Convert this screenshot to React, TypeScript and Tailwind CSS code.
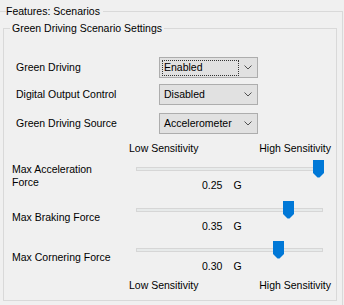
import React from "react";

const Chevron = () => (
  <svg width="8" height="5" viewBox="0 0 8 5" className="block">
    <polyline points="0.5,0.5 4,4 7.5,0.5" fill="none" stroke="#505050" strokeWidth="1" />
  </svg>
);

const Dropdown = ({ value, focused }: { value: string; focused?: boolean }) => (
  <div className="flex h-[21px] w-[99px] items-center border border-[#adadad] bg-[#e1e1e1]">
    <span
      className={
        "ml-[2px] flex h-[16px] w-[77px] items-center pl-[1px] leading-[13px] border border-dotted " +
        (focused ? "border-[#333333]" : "border-transparent")
      }
    >
      {value}
    </span>
    <div className="flex flex-1 justify-center">
      <Chevron />
    </div>
  </div>
);

const Thumb = ({ left }: { left: number }) => (
  <svg
    width="11"
    height="18"
    viewBox="0 0 11 18"
    className="absolute top-0 block"
    style={{ left }}
  >
    <path d="M0 0 H11 V13 L6.5 17.5 H4.5 L0 13 Z" fill="#0078d7" />
  </svg>
);

const SliderBlock = ({
  label,
  value,
  thumb,
}: {
  label: React.ReactNode;
  value: string;
  thumb: number;
}) => (
  <div className="flex">
    <div className="flex w-[117px] items-center leading-[13px]">{label}</div>
    <div className="w-[202px]">
      <div className="relative flex h-[18px] items-center">
        <div className="ml-[7px] mr-[8px] h-[4px] flex-1 border border-[#d6d6d6] bg-[#e7eaea]" />
        <Thumb left={thumb} />
      </div>
      <div className="flex h-[14px] items-center pl-[73px] leading-[13px]">
        <span>{value}</span>
        <span className="ml-[11px]">G</span>
      </div>
    </div>
  </div>
);

const SensRow = () => (
  <div className="flex h-[14px] items-center leading-[13px]">
    <div className="w-[117px]" />
    <div className="flex w-[202px] justify-between">
      <span>Low Sensitivity</span>
      <span>High Sensitivity</span>
    </div>
  </div>
);

export default function App() {
  return (
    <div
      className="h-[305px] w-[344px] overflow-hidden bg-[#f0f0f0] text-[10.5px] text-black"
      style={{ fontFamily: '"Liberation Sans", Arial, sans-serif' }}
    >
      <fieldset className="mt-[4px] h-[320px] w-[343px] border-t border-r border-[#d9d9d9]">
        <legend className="ml-[6px] pr-[3px] leading-[14px]">Features: Scenarios</legend>
        <fieldset className="ml-[3px] mt-[3px] h-[280px] w-[334px] border border-[#d9d9d9]">
          <legend className="ml-[6px] px-[2px] leading-[14px]">Green Driving Scenario Settings</legend>
          <div className="pl-[8px] pt-[22px]">
            <div className="flex h-[21px] items-center">
              <div className="w-[147px] pl-[4px]">Green Driving</div>
              <Dropdown value="Enabled" focused />
            </div>
            <div className="mt-[6px] flex h-[21px] items-center">
              <div className="w-[147px] pl-[4px]">Digital Output Control</div>
              <Dropdown value="Disabled" />
            </div>
            <div className="mt-[8px] flex h-[21px] items-center">
              <div className="w-[147px] pl-[4px]">Green Driving Source</div>
              <Dropdown value="Accelerometer" />
            </div>
            <div className="mt-[7px]">
              <SensRow />
            </div>
            <div className="mt-[5px]">
              <SliderBlock
                label={
                  <span>
                    Max Acceleration
                    <br />
                    Force
                  </span>
                }
                value="0.25"
                thumb={184}
              />
            </div>
            <div className="mt-[9px]">
              <SliderBlock label="Max Braking Force" value="0.35" thumb={154} />
            </div>
            <div className="mt-[8px]">
              <SliderBlock label="Max Cornering Force" value="0.30" thumb={144} />
            </div>
            <div className="mt-[5px]">
              <SensRow />
            </div>
          </div>
        </fieldset>
      </fieldset>
    </div>
  );
}
